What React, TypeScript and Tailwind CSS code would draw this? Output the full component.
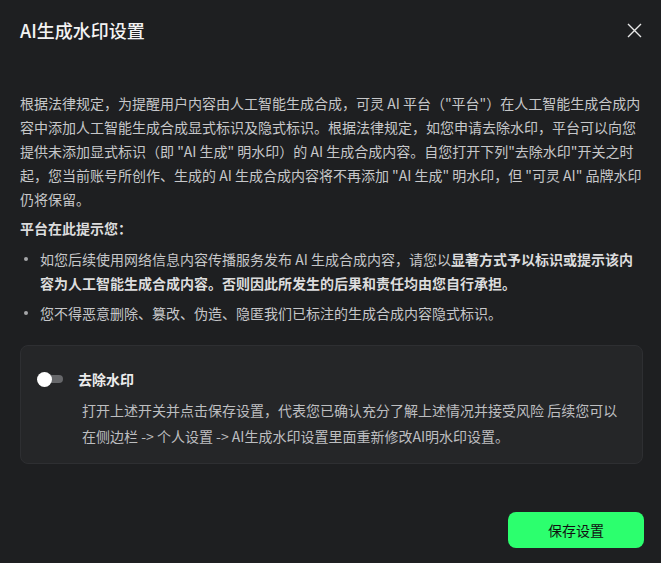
import React, { useState } from 'react'

const font = { fontFamily: '"Noto Sans CJK SC", "Noto Sans", sans-serif' }

export default function App() {
    const [removeMark, setRemoveMark] = useState(false)

    return (
        <div className="w-[661px] h-[563px] bg-[#1e1f21] text-[#c6c7c9] overflow-hidden flex flex-col" style={font}>
            {/* header */}
            <div className="h-[60px] flex items-center justify-between pl-5 pr-[19px] shrink-0">
                <h2 className="text-[18px] leading-6 font-medium text-[#f3f3f3]">AI生成水印设置</h2>
                <button className="w-[16px] h-[16px] flex items-center justify-center text-[#e8e8e8]">
                    <svg width="15" height="15" viewBox="0 0 15 15" fill="none" stroke="currentColor" strokeWidth="1.4">
                        <path d="M1 1 L14 14 M14 1 L1 14" />
                    </svg>
                </button>
            </div>

            <div className="px-5 flex flex-col">
                {/* lines broken where the original breaks them */}
                <p className="mt-[31px] text-[14px] leading-6 w-[636px]">
                    根据法律规定，为提醒用户内容由人工智能生成合成，可灵 AI 平台（"平台"）在人工智能生成合成内<br />
                    容中添加人工智能生成合成显式标识及隐式标识。根据法律规定，如您申请去除水印，平台可以向您<br />
                    提供未添加显式标识（即 "AI 生成" 明水印）的 AI 生成合成内容。自您打开下列"去除水印"开关之时<br />
                    起，您当前账号所创作、生成的 AI 生成合成内容将不再添加 "AI 生成" 明水印，但 "可灵 AI" 品牌水印<br />
                    仍将保留。
                </p>

                <p className="mt-[5px] text-[14px] leading-6 font-bold text-[#dcdcdd]">平台在此提示您：</p>

                <ul className="mt-[7px] flex flex-col gap-[6px] text-[14px] leading-6">
                    <li className="flex">
                        <span className="w-[20px] h-6 shrink-0 pl-[4px] flex items-center">
                            <span className="w-[4px] h-[4px] rounded-full bg-[#a5a6a8]" />
                        </span>
                        <span className="w-[602px]">
                            如您后续使用网络信息内容传播服务发布 AI 生成合成内容，请您以<b className="font-bold text-[#dcdcdd]">显著方式予以标识或提示该内容为人工智能生成合成内容。否则因此所发生的后果和责任均由您自行承担。</b>
                        </span>
                    </li>
                    <li className="flex">
                        <span className="w-[20px] h-6 shrink-0 pl-[4px] flex items-center">
                            <span className="w-[4px] h-[4px] rounded-full bg-[#a5a6a8]" />
                        </span>
                        <span>您不得恶意删除、篡改、伪造、隐匿我们已标注的生成合成内容隐式标识。</span>
                    </li>
                </ul>

                {/* switch card */}
                <div className="mt-[20px] w-[623px] rounded-lg bg-[#252628] border border-[#2e2f32] pt-[21px] pb-[14px] pl-[16px] pr-[22px]">
                    <div className="flex items-center h-6">
                        <button
                            onClick={() => setRemoveMark(!removeMark)}
                            className={`relative w-[28px] h-[15px] flex items-center ${removeMark ? 'justify-end' : 'justify-start'}`}
                        >
                            <span className={`absolute left-[4px] w-[22px] h-[8px] rounded-full ${removeMark ? 'bg-[#2cff6e]' : 'bg-[#66676a]'}`} />
                            <span className="relative w-[15px] h-[15px] rounded-full bg-white" />
                        </button>
                        <span className="ml-[13px] text-[14px] font-bold text-[#ececec]">去除水印</span>
                    </div>
                    <p className="mt-[6px] pl-[45px] text-[14px] leading-[26px] text-[#bdbec0]">
                        打开上述开关并点击保存设置，代表您已确认充分了解上述情况并接受风险 后续您可以在侧边栏 -&gt; 个人设置 -&gt; AI生成水印设置里面重新修改AI明水印设置。
                    </p>
                </div>

                <div className="mt-[48px] flex justify-end -mr-[3px]">
                    <button className="w-[136px] h-[36px] rounded-lg bg-[#2cff6e] text-[#111] text-[14px]">保存设置</button>
                </div>
            </div>
        </div>
    )
}
